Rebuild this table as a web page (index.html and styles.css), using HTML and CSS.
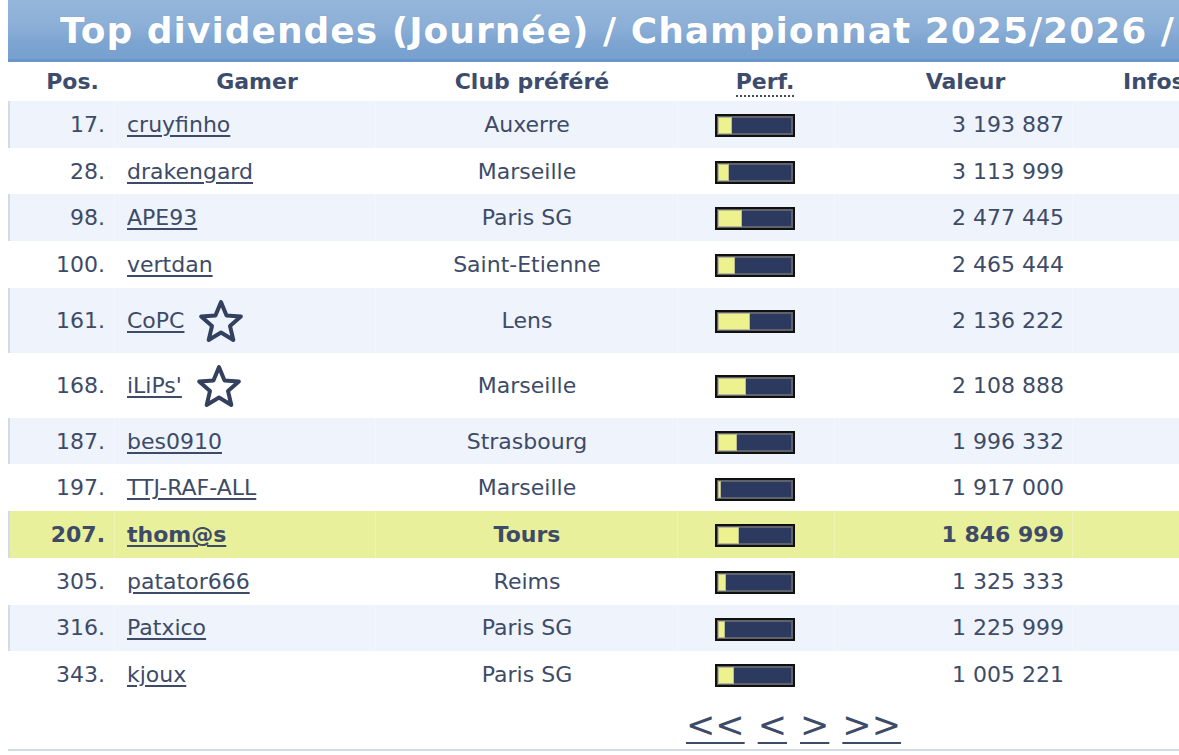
FILE: index.html
```html
<!DOCTYPE html>
<html lang="fr">
<head>
<meta charset="utf-8">
<title>Top dividendes</title>
<link rel="stylesheet" href="styles.css">
</head>
<body>
<div class="page">
  <h1 class="title">Top dividendes (Journée) / Championnat 2025/2026 /</h1>
  <table class="ranking">
    <colgroup>
      <col class="c-pos"><col class="c-gamer"><col class="c-club"><col class="c-perf"><col class="c-val"><col class="c-info">
    </colgroup>
    <thead>
      <tr>
        <th class="h-pos">Pos.</th>
        <th class="h-gamer">Gamer</th>
        <th class="h-club">Club préféré</th>
        <th class="h-perf"><abbr class="perf-abbr" title="Performance">Perf.</abbr></th>
        <th class="h-val">Valeur</th>
        <th class="h-info">Infos</th>
      </tr>
    </thead>
    <tbody>
      <tr class="odd"><td class="pos">17.</td><td class="gamer"><a href="#">cruyfinho</a></td><td class="club">Auxerre</td><td class="perf"><div class="bar"><div class="fill" style="width:19%"></div></div></td><td class="val">3&nbsp;193&nbsp;887</td><td></td></tr>
      <tr><td class="pos">28.</td><td class="gamer"><a href="#">drakengard</a></td><td class="club">Marseille</td><td class="perf"><div class="bar"><div class="fill" style="width:15%"></div></div></td><td class="val">3&nbsp;113&nbsp;999</td><td></td></tr>
      <tr class="odd"><td class="pos">98.</td><td class="gamer"><a href="#">APE93</a></td><td class="club">Paris SG</td><td class="perf"><div class="bar"><div class="fill" style="width:32%"></div></div></td><td class="val">2&nbsp;477&nbsp;445</td><td></td></tr>
      <tr><td class="pos">100.</td><td class="gamer"><a href="#">vertdan</a></td><td class="club">Saint-Etienne</td><td class="perf"><div class="bar"><div class="fill" style="width:23%"></div></div></td><td class="val">2&nbsp;465&nbsp;444</td><td></td></tr>
      <tr class="odd tall"><td class="pos">161.</td><td class="gamer"><span class="name-star"><a href="#">CoPC</a><svg class="star" viewBox="0 0 44 44" width="46" height="46"><polygon points="22,3 27.3,15.7 41,16.8 30.6,25.8 33.8,39.2 22,32 10.2,39.2 13.4,25.8 3,16.8 16.7,15.7"/></svg></span></td><td class="club">Lens</td><td class="perf"><div class="bar"><div class="fill" style="width:43%"></div></div></td><td class="val">2&nbsp;136&nbsp;222</td><td></td></tr>
      <tr class="tall"><td class="pos">168.</td><td class="gamer"><span class="name-star"><a href="#">iLiPs'</a><svg class="star" viewBox="0 0 44 44" width="46" height="46"><polygon points="22,3 27.3,15.7 41,16.8 30.6,25.8 33.8,39.2 22,32 10.2,39.2 13.4,25.8 3,16.8 16.7,15.7"/></svg></span></td><td class="club">Marseille</td><td class="perf"><div class="bar"><div class="fill" style="width:38%"></div></div></td><td class="val">2&nbsp;108&nbsp;888</td><td></td></tr>
      <tr class="odd"><td class="pos">187.</td><td class="gamer"><a href="#">bes0910</a></td><td class="club">Strasbourg</td><td class="perf"><div class="bar"><div class="fill" style="width:25%"></div></div></td><td class="val">1&nbsp;996&nbsp;332</td><td></td></tr>
      <tr><td class="pos">197.</td><td class="gamer"><a href="#">TTJ-RAF-ALL</a></td><td class="club">Marseille</td><td class="perf"><div class="bar"><div class="fill" style="width:3%"></div></div></td><td class="val">1&nbsp;917&nbsp;000</td><td></td></tr>
      <tr class="me"><td class="pos">207.</td><td class="gamer"><a href="#">thom@s</a></td><td class="club">Tours</td><td class="perf"><div class="bar"><div class="fill" style="width:29%"></div></div></td><td class="val">1&nbsp;846&nbsp;999</td><td></td></tr>
      <tr><td class="pos">305.</td><td class="gamer"><a href="#">patator666</a></td><td class="club">Reims</td><td class="perf"><div class="bar"><div class="fill" style="width:11%"></div></div></td><td class="val">1&nbsp;325&nbsp;333</td><td></td></tr>
      <tr class="odd"><td class="pos">316.</td><td class="gamer"><a href="#">Patxico</a></td><td class="club">Paris SG</td><td class="perf"><div class="bar"><div class="fill" style="width:10%"></div></div></td><td class="val">1&nbsp;225&nbsp;999</td><td></td></tr>
      <tr><td class="pos">343.</td><td class="gamer"><a href="#">kjoux</a></td><td class="club">Paris SG</td><td class="perf"><div class="bar"><div class="fill" style="width:21%"></div></div></td><td class="val">1&nbsp;005&nbsp;221</td><td></td></tr>
    </tbody>
  </table>
  <nav class="pager">
    <a href="#">&lt;&lt;</a> <a href="#">&lt;</a> <a href="#">&gt;</a> <a href="#">&gt;&gt;</a>
  </nav>
</div>
</body>
</html>
```

FILE: styles.css
```css
html, body {
  margin: 0;
  padding: 0;
  overflow: hidden;
  background: #ffffff;
}

body {
  font-family: "DejaVu Sans", Verdana, sans-serif;
  color: #3d4b68;
}

.page {
  margin-left: 8px;
  width: 1300px;
}

.title {
  margin: 0;
  height: 62px;
  padding-left: 52px;
  box-sizing: border-box;
  font-size: 36px;
  letter-spacing: 1px;
  line-height: 62px;
  font-weight: bold;
  color: #ffffff;
  white-space: nowrap;
  overflow: hidden;
  background: linear-gradient(#94b6da 0%, #8cafd7 45%, #7ea5d1 70%, #76a0cf 100%);
  border-bottom: 3px solid #6996c8;
  text-shadow: 0 0 1px rgba(60, 90, 130, 0.25);
}

.ranking {
  border-collapse: collapse;
  table-layout: fixed;
  width: 1260px;
  font-size: 22px;
}

.c-pos { width: 107px; }
.c-gamer { width: 261px; }
.c-club { width: 302px; }
.c-perf { width: 157px; }
.c-val { width: 238px; }
.c-info { width: 195px; }

.ranking th {
  height: 39px;
  padding: 0;
  font-weight: bold;
  color: #3d4c6c;
  text-align: center;
  white-space: nowrap;
  vertical-align: middle;
}

.h-pos { padding-left: 22px !important; }
.h-gamer { padding-left: 23px !important; }
.h-club { padding-left: 10px !important; }
.h-perf { padding-left: 17px !important; }
.h-val { padding-left: 23px !important; }
.h-info { text-align: left !important; padding-left: 50px !important; }

.perf-abbr {
  text-decoration: none;
  border-bottom: 2px dotted #3d4c6c;
  padding-bottom: 1px;
}

.ranking td {
  height: 46.7px;
  padding: 0;
  vertical-align: middle;
  white-space: nowrap;
  box-shadow: inset -1px 0 rgba(255, 255, 255, 0.25);
}

.ranking tr.tall td {
  height: 65px;
}

.ranking tr.odd td {
  background: #eef3fc;
}

.ranking tr.odd td:first-child,
.ranking tr.me td:first-child {
  box-shadow: inset 2px 0 #d2dbe7, inset -1px 0 rgba(255, 255, 255, 0.25);
}

.ranking tr.me td {
  background: #e9f09c;
  font-weight: bold;
}

.pos {
  text-align: right;
  padding-right: 10px !important;
}

.gamer {
  padding-left: 12px !important;
}

.gamer a {
  color: #3d4b68;
  text-decoration: underline;
  text-decoration-thickness: 1.5px;
  text-underline-offset: 3px;
}

.name-star {
  display: inline-flex;
  align-items: center;
  gap: 14px;
}

.star {
  display: block;
  margin-top: 4px;
}

.star polygon {
  fill: none;
  stroke: #33415f;
  stroke-width: 3.8;
  stroke-linejoin: round;
}

.club {
  text-align: center;
}

.perf {
  text-align: center;
}

.bar {
  display: inline-block;
  vertical-align: middle;
  width: 80px;
  height: 23px;
  box-sizing: border-box;
  border: 2px solid #101010;
  background: #2d3a60;
  box-shadow: inset 0 0 0 2px #5f636c;
  padding: 1px;
  margin-left: -3px;
}

.fill {
  height: 100%;
  min-width: 3px;
  background: #edf18e;
  box-shadow: inset 0 0 0 1px #b9bb8e;
}

.val {
  text-align: right;
  padding-right: 9px !important;
}

.pager {
  height: 53px;
  box-sizing: border-box;
  padding-left: 678px;
  padding-top: 5px;
  display: flex;
  align-items: center;
  gap: 13px;
  font-size: 35px;
  border-bottom: 2px solid #d3dce6;
  width: 1171px;
}

.pager a {
  color: #3d4b68;
  text-decoration: underline;
  text-decoration-thickness: 2px;
  text-underline-offset: 5px;
  line-height: 1;
}
```
